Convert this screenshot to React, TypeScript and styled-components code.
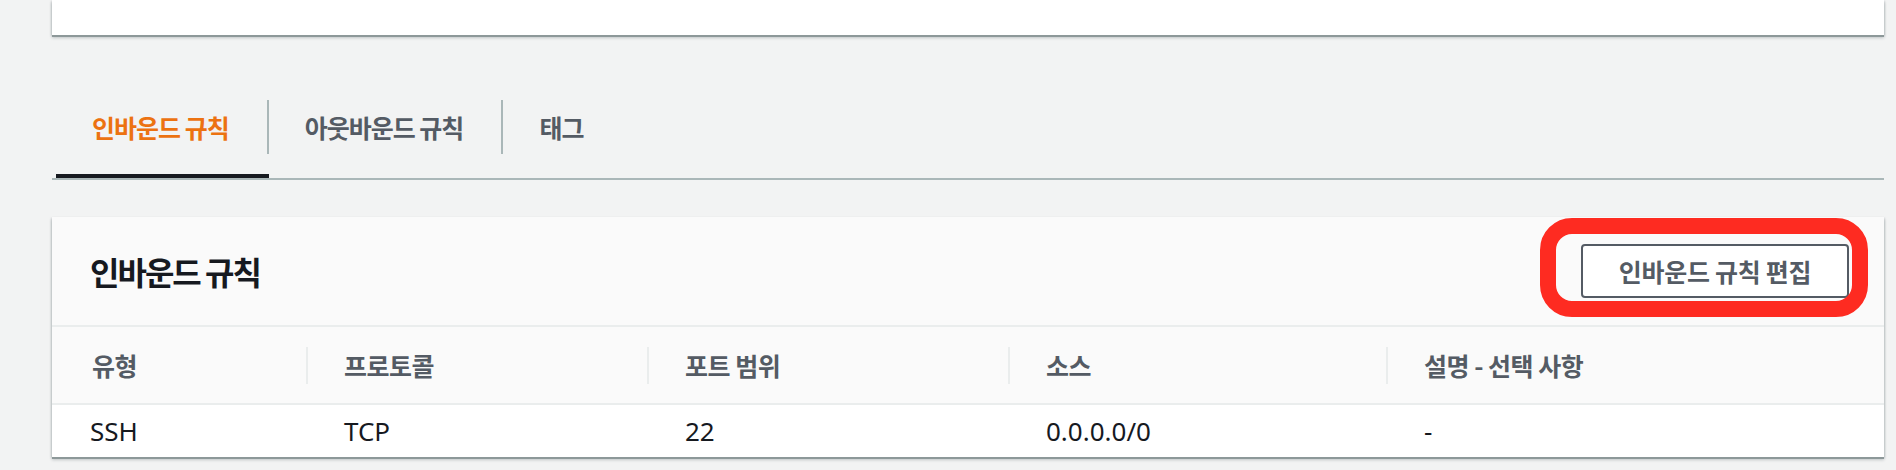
import * as React from 'react';
import styled, { createGlobalStyle } from 'styled-components';

const GlobalStyle = createGlobalStyle`
  body {
    margin: 0;
    background: #f2f3f3;
    font-family: "Noto Sans", "Noto Sans CJK KR", sans-serif;
    color: #16191f;
  }
`;

const Page = styled.div`
  padding: 0 12px 40px 52px;
`;

const cardShadow = `
  box-shadow: 0 2px 0 0 #8d9899, 0 3px 3px 0 rgba(0, 28, 36, 0.2),
    -1px 1px 2px 0 rgba(0, 28, 36, 0.15), 1px 1px 2px 0 rgba(0, 28, 36, 0.15);
`;

const TopCard = styled.div`
  height: 35px;
  background: #fff;
  ${cardShadow}
`;

const TabRow = styled.div`
  display: flex;
  margin-top: 65px;
  padding-left: 4px;
  border-bottom: 2px solid #aab7b8;
`;

const Tab = styled.div<{ $active?: boolean }>`
  display: flex;
  flex-direction: column;
  padding-bottom: 20px;
  border-bottom: 4px solid ${(p) => (p.$active ? '#16191f' : 'transparent')};
`;

const TabLabel = styled.span<{ $active?: boolean; $last?: boolean }>`
  height: 54px;
  display: flex;
  align-items: center;
  padding: 0 38px 0 36px;
  border-right: 2px solid ${(p) => (p.$last ? 'transparent' : '#aab7b8')};
  font-family: "Noto Sans CJK KR", sans-serif;
  font-size: 25px;
  letter-spacing: -1px;
  font-weight: 700;
  color: ${(p) => (p.$active ? '#ec7211' : '#545b64')};
`;

const Card = styled.div`
  margin-top: 37px;
  background: #fafafa;
  ${cardShadow}
`;

const CardHeader = styled.div`
  height: 108px;
  display: flex;
  align-items: center;
  justify-content: space-between;
  padding: 0 35px 0 38px;
  border-bottom: 2px solid #eaeded;
`;

const Title = styled.h2`
  margin: 0;
  font-family: "Noto Sans CJK KR", sans-serif;
  font-size: 32px;
  letter-spacing: -2px;
  font-weight: 700;
  color: #16191f;
`;

const ButtonWrap = styled.div`
  position: relative;
`;

const Highlight = styled.div`
  position: absolute;
  top: -26px;
  left: -41px;
  right: -19px;
  bottom: -19px;
  border: 16px solid #fe2b21;
  border-radius: 32px;
  pointer-events: none;
`;

const EditButton = styled.button`
  width: 268px;
  height: 54px;
  background: #fff;
  border: 2px solid #545b64;
  border-radius: 4px;
  font-family: "Noto Sans CJK KR", sans-serif;
  font-size: 25px;
  letter-spacing: -0.3px;
  font-weight: 700;
  color: #545b64;
`;

const Grid = styled.div<{ $head?: boolean }>`
  display: grid;
  grid-template-columns: 254px 341px 361px 378px 1fr;
  background: ${(p) => (p.$head ? '#fafafa' : '#fff')};
  height: ${(p) => (p.$head ? '76px' : '52px')};
  align-items: center;
  border-bottom: ${(p) => (p.$head ? '2px solid #eaeded' : 'none')};
`;

const HeadCell = styled.div<{ $first?: boolean }>`
  height: 37px;
  display: flex;
  align-items: center;
  padding-left: ${(p) => (p.$first ? '38px' : '36px')};
  border-left: 2px solid ${(p) => (p.$first ? 'transparent' : '#eaeded')};
  font-family: "Noto Sans CJK KR", sans-serif;
  font-size: 25px;
  letter-spacing: -0.5px;
  font-weight: 700;
  color: #545b64;
`;

const Cell = styled.div`
  padding-left: 38px;
  font-size: 26px;
  color: #16191f;
`;

const columns = ['유형', '프로토콜', '포트 범위', '소스', '설명 - 선택 사항'];
const row = ['SSH', 'TCP', '22', '0.0.0.0/0', '-'];
const tabs = ['인바운드 규칙', '아웃바운드 규칙', '태그'];

const App = () => {
  return (
    <Page>
      <GlobalStyle />
      <TopCard />
      <TabRow>
        {tabs.map((t, i) => (
          <Tab key={t} $active={i === 0}>
            <TabLabel $active={i === 0} $last={i === tabs.length - 1}>
              {t}
            </TabLabel>
          </Tab>
        ))}
      </TabRow>
      <Card>
        <CardHeader>
          <Title>인바운드 규칙</Title>
          <ButtonWrap>
            <EditButton>인바운드 규칙 편집</EditButton>
            <Highlight />
          </ButtonWrap>
        </CardHeader>
        <Grid $head>
          {columns.map((c, i) => (
            <HeadCell key={c} $first={i === 0}>
              {c}
            </HeadCell>
          ))}
        </Grid>
        <Grid>
          {row.map((v, i) => (
            <Cell key={i}>{v}</Cell>
          ))}
        </Grid>
      </Card>
    </Page>
  );
};

export default App;
